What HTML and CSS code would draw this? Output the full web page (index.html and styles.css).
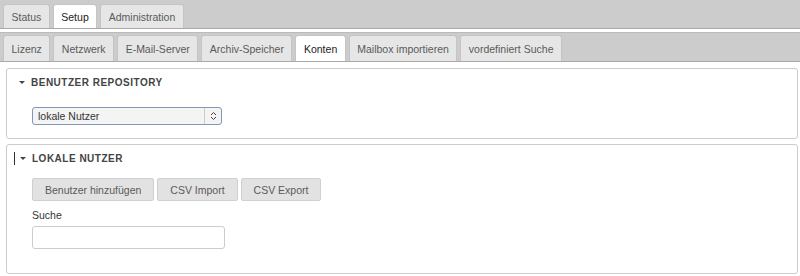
FILE: index.html
```html
<!DOCTYPE html>
<html lang="de">
<head>
    <meta charset="UTF-8">
    <title>Setup - Konten</title>
    <link rel="stylesheet" href="styles.css">
</head>
<body>

<!-- Main navigation -->
<div class="tab-bar main-tabs">
    <a href="#" class="tab">Status</a>
    <a href="#" class="tab active">Setup</a>
    <a href="#" class="tab">Administration</a>
</div>

<!-- Setup sub navigation -->
<div class="tab-bar sub-tabs">
    <a href="#" class="tab">Lizenz</a>
    <a href="#" class="tab">Netzwerk</a>
    <a href="#" class="tab">E-Mail-Server</a>
    <a href="#" class="tab">Archiv-Speicher</a>
    <a href="#" class="tab active">Konten</a>
    <a href="#" class="tab">Mailbox importieren</a>
    <a href="#" class="tab">vordefiniert Suche</a>
</div>

<div class="content">
    <!-- Benutzer Repository -->
    <div class="panel repo-panel">
        <div class="panel-header"><span class="toggle"></span>BENUTZER REPOSITORY</div>
        <div class="panel-body">
            <div class="select-box">
                <span class="select-value">lokale Nutzer</span>
                <span class="select-arrows">
                    <svg width="7" height="10" viewBox="0 0 7 10">
                        <path d="M1 4 L3.5 1.5 L6 4 M1 6 L3.5 8.5 L6 6" fill="none" stroke="#444" stroke-width="1"/>
                    </svg>
                </span>
            </div>
        </div>
    </div>

    <!-- Lokale Nutzer -->
    <div class="panel users-panel">
        <div class="panel-header"><span class="caret"></span><span class="toggle"></span>LOKALE NUTZER</div>
        <div class="panel-body">
            <div class="button-row">
                <button class="btn">Benutzer hinzufügen</button>
                <button class="btn">CSV Import</button>
                <button class="btn">CSV Export</button>
            </div>
            <label for="searchInput" class="field-label">Suche</label>
            <input type="text" id="searchInput" class="search-input">
        </div>
    </div>
</div>

</body>
</html>
```

FILE: styles.css
```css
body {
    font-family: "Liberation Sans", Arial, sans-serif;
    font-size: 10.5px;
    color: #333;
    background-color: #fff;
    margin: 0;
    padding: 0;
}
.tab-bar {
    display: flex;
    gap: 3px;
    background-color: #ccc;
    border-bottom: 1px solid #aaa;
    padding: 4px 3px 0;
    height: 24px;
}
.sub-tabs {
    margin-top: 3px;
    border-top: 1px solid #bbb;
    padding-top: 2px;
    height: 26px;
}
.tab {
    display: block;
    background-color: #e6e6e6;
    color: #5a5a5a;
    text-decoration: none;
    border: 1px solid #c4c4c4;
    border-bottom: none;
    border-radius: 3px 3px 0 0;
    padding: 0 7.5px;
    line-height: 24px;
}
.sub-tabs .tab {
    line-height: 26px;
}
.tab.active {
    background-color: #fff;
    color: #222;
}
.content {
    padding: 6px 2px 0 6px;
}
.panel {
    border: 1px solid #ccc;
    border-radius: 3px;
    margin-bottom: 5px;
}
.panel-header {
    display: flex;
    align-items: center;
    font-size: 10px;
    font-weight: bold;
    letter-spacing: 0.5px;
    color: #444;
    padding: 7px 0 0 12px;
    height: 13px;
}
.toggle {
    width: 0;
    height: 0;
    border-left: 3px solid transparent;
    border-right: 3px solid transparent;
    border-top: 3px solid #444;
    margin-right: 6px;
}
.caret {
    width: 1px;
    height: 13px;
    background-color: #333;
    margin: 0 5px 0 -5px;
}
.panel-body {
    padding: 0 0 0 25px;
}
.repo-panel {
    height: 69px;
}
.repo-panel .panel-body {
    padding-top: 18px;
}
.select-box {
    display: flex;
    align-items: center;
    width: 188px;
    height: 16px;
    border: 1px solid #7f97bd;
    border-radius: 3px;
    background-color: #f4f4f4;
    color: #333;
}
.select-value {
    flex: 1;
    padding-left: 5px;
}
.select-arrows {
    display: flex;
    align-items: center;
    justify-content: center;
    width: 16px;
    height: 16px;
    border-left: 1px solid #ccc;
}
.users-panel {
    height: 128px;
}
.users-panel .panel-body {
    padding-top: 13px;
}
.button-row {
    display: flex;
    gap: 3px;
}
.btn {
    font-family: "Liberation Sans", Arial, sans-serif;
    font-size: 10.5px;
    color: #5a5a5a;
    background-color: #e2e2e2;
    border: 1px solid #d0d0d0;
    border-radius: 2px;
    height: 23px;
    padding: 0 12px;
}
.field-label {
    display: block;
    margin-top: 8px;
    color: #333;
}
.search-input {
    display: block;
    margin-top: 5px;
    width: 187px;
    height: 21px;
    box-sizing: content-box;
    border: 1px solid #ccc;
    border-radius: 3px;
    padding: 0 2px;
}
```
